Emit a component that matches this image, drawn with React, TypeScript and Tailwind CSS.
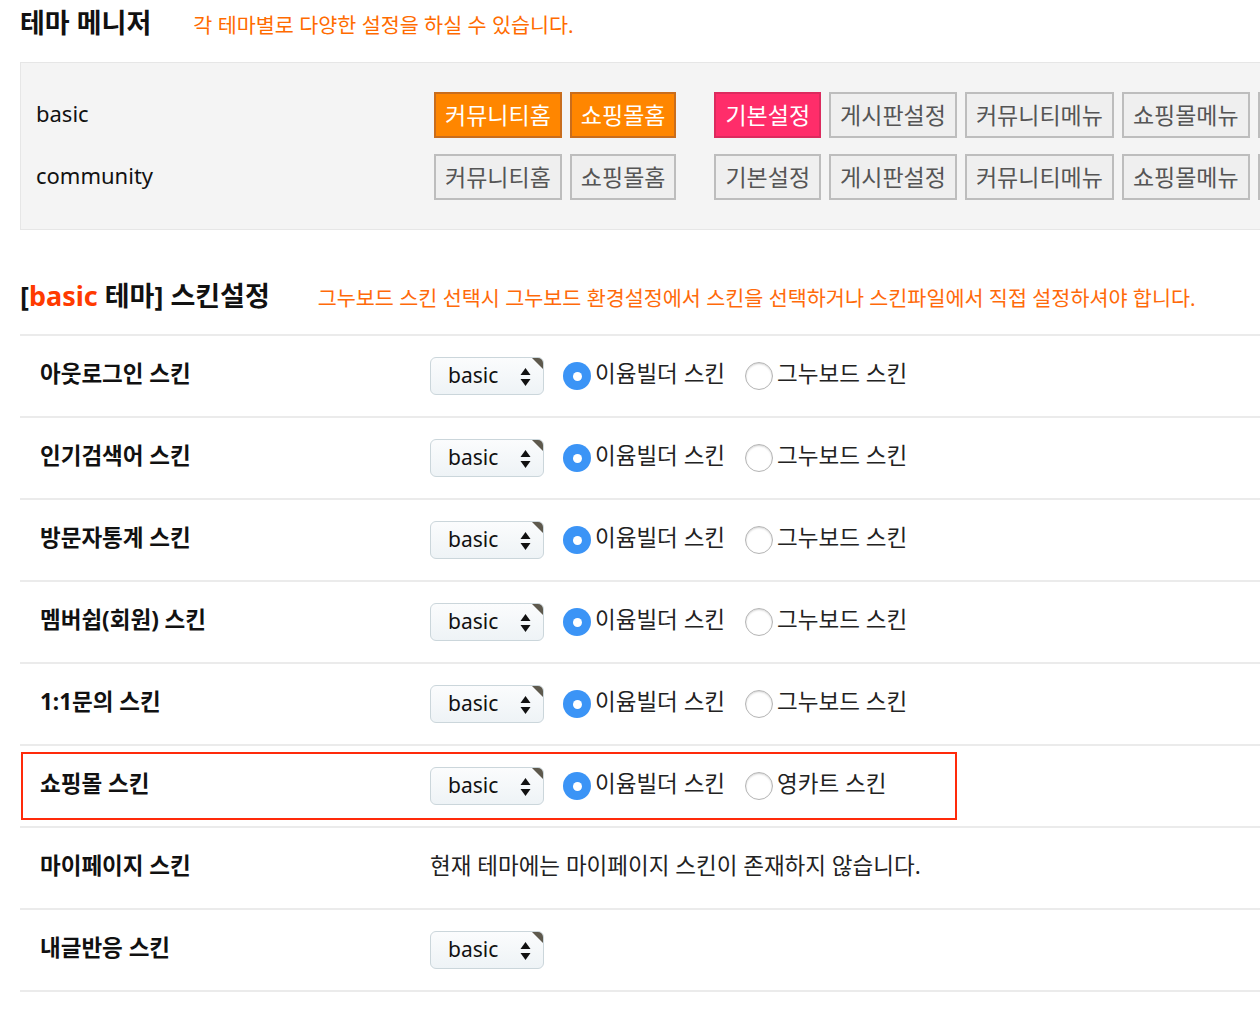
const font = { fontFamily: '"Noto Sans", "Noto Sans CJK KR", sans-serif' }

const groupA = ['커뮤니티홈', '쇼핑몰홈']
const groupB = ['기본설정', '게시판설정', '커뮤니티메뉴', '쇼핑몰메뉴']

function ThemeRow({ name, active }: { name: string; active: boolean }) {
  const gray = 'bg-[#efefef] border-[#bdbdbd] text-[#555]'
  return (
    <div className="flex items-center">
      <div className="w-[398px] shrink-0 text-[22px] text-[#111] -mt-[3px]">{name}</div>
      <div className="flex gap-[8px]">
        {groupA.map((b) => (
          <div
            key={b}
            className={`shrink-0 h-[46px] px-[9px] border-2 text-[23px] leading-[42px] ${
              active ? 'bg-[#ff8600] border-[#c96d1c] text-white' : gray
            }`}
          >
            {b}
          </div>
        ))}
      </div>
      <div className="flex gap-[8px] ml-[38px]">
        {groupB.map((b, i) => (
          <div
            key={b}
            className={`shrink-0 h-[46px] px-[9px] border-2 text-[23px] leading-[42px] ${
              active && i === 0 ? 'bg-[#ff2d6a] border-[#dc2a5e] text-white' : gray
            }`}
          >
            {b}
          </div>
        ))}
        {/* next button, cut off at the window edge */}
        <div className={`shrink-0 w-[128px] h-[46px] border-2 ${gray}`} />
      </div>
    </div>
  )
}

function Select() {
  return (
    <div className="relative shrink-0 w-[114px] h-[38px] rounded-[6px] overflow-hidden border border-[#cbd6db] bg-gradient-to-b from-[#fbfcfd] to-[#eef3f6] flex items-center pl-[17px] text-[21px] text-[#111]">
      basic
      <svg className="absolute right-[12px] top-[9px]" width="11" height="20" viewBox="0 0 11 20">
        <path d="M5.5 1 L10.5 8 H0.5 Z" fill="#111" />
        <path d="M5.5 19 L10.5 12 H0.5 Z" fill="#111" />
      </svg>
      <svg className="absolute right-0 top-0" width="11" height="11" viewBox="0 0 11 11">
        <path d="M0 0 H11 V11 Z" fill="#5e594d" />
      </svg>
    </div>
  )
}

function Radio({ on }: { on: boolean }) {
  return on ? (
    <div className="shrink-0 w-[28px] h-[28px] rounded-full bg-[#3b94f6] flex items-center justify-center">
      <div className="w-[9px] h-[9px] rounded-full bg-white" />
    </div>
  ) : (
    <div className="shrink-0 w-[28px] h-[28px] rounded-full border border-[#b5b5b5] bg-white shadow-[inset_0_1px_2px_rgba(0,0,0,0.18)]" />
  )
}

type Row = { label: string; alt?: string; note?: string; noRadio?: boolean; mark?: boolean }

const rows: Row[] = [
  { label: '아웃로그인 스킨' },
  { label: '인기검색어 스킨' },
  { label: '방문자통계 스킨' },
  { label: '멤버쉽(회원) 스킨' },
  { label: '1:1문의 스킨' },
  { label: '쇼핑몰 스킨', alt: '영카트 스킨', mark: true },
  { label: '마이페이지 스킨', note: '현재 테마에는 마이페이지 스킨이 존재하지 않습니다.' },
  { label: '내글반응 스킨', noRadio: true },
]

function SkinRow({ row }: { row: Row }) {
  return (
    <div className="border-b-2 border-[#ebebeb] h-[82px] pt-[6px]">
      <div
        className={`ml-[1px] w-[936px] h-[68px] border-2 pl-[17px] flex items-center ${
          row.mark ? 'border-[#ff2a0a]' : 'border-transparent'
        }`}
      >
        <div className="w-[390px] shrink-0 text-[22.5px] font-bold text-[#111] -mt-[4px]">{row.label}</div>
        {row.note ? (
          <div className="text-[22.5px] text-[#222] -mt-[4px]">{row.note}</div>
        ) : (
          <>
            <Select />
            {!row.noRadio && (
              <>
                <div className="ml-[19px]">
                  <Radio on />
                </div>
                <span className="ml-[4px] text-[22.5px] text-[#222] -mt-[4px]">이윰빌더 스킨</span>
                <div className="ml-[20px]">
                  <Radio on={false} />
                </div>
                <span className="ml-[4px] text-[22.5px] text-[#222] -mt-[4px]">{row.alt ?? '그누보드 스킨'}</span>
              </>
            )}
          </>
        )}
      </div>
    </div>
  )
}

export default function App() {
  return (
    <div className="min-h-screen bg-white overflow-hidden" style={font}>
      <div className="w-[1400px] pl-[20px]">
        <div className="h-[62px] flex items-baseline pt-[4px]">
          <h1 className="text-[27px] font-bold text-[#111] leading-[38px]">테마 메니저</h1>
          <span className="ml-[42px] text-[20.7px] text-[#ff6b00]">각 테마별로 다양한 설정을 하실 수 있습니다.</span>
        </div>

        <div className="bg-[#f4f4f4] border border-r-0 border-[#e6e6e6] pl-[15px] pt-[29px] pb-[29px] flex flex-col gap-[16px]">
          <ThemeRow name="basic" active />
          <ThemeRow name="community" active={false} />
        </div>

        <div className="flex items-baseline pt-[45px] pb-[17px]">
          <h2 className="text-[27px] font-bold text-[#111] leading-[42px]">
            [<span className="text-[#ff3a00]">basic</span> 테마] 스킨설정
          </h2>
          <span className="ml-[48px] text-[20.7px] text-[#ff6a0a]">
            그누보드 스킨 선택시 그누보드 환경설정에서 스킨을 선택하거나 스킨파일에서 직접 설정하셔야 합니다.
          </span>
        </div>

        <div className="border-t-2 border-[#ebebeb]">
          {rows.map((r) => (
            <SkinRow key={r.label} row={r} />
          ))}
        </div>
      </div>
    </div>
  )
}
